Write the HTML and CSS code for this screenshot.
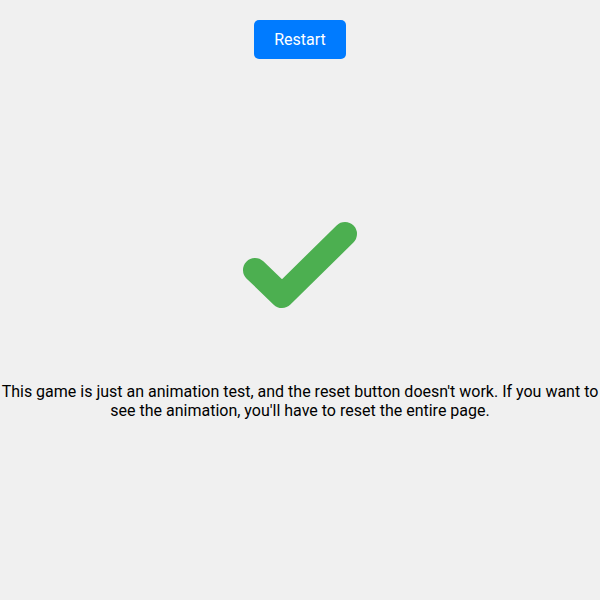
FILE: index.html
```html
<!DOCTYPE html>
<html>
<head>
<meta charset="utf-8">
<link rel="stylesheet" href="styles.css">
</head>
<body>
<div class="page">
  <button class="restart">Restart</button>
  <svg class="check" width="120" height="100" viewBox="0 0 120 100">
    <polyline points="15,55 42,81 105,19" fill="none" stroke="#4caf50" stroke-width="24" stroke-linecap="round" stroke-linejoin="round"/>
  </svg>
  <p class="note">This game is just an animation test, and the reset button doesn't work. If you want to see the animation, you'll have to reset the entire page.</p>
</div>
</body>
</html>
```
FILE: styles.css
```css
html, body {
  margin: 0;
  padding: 0;
  background: #f0f0f0;
}
.page {
  display: flex;
  flex-direction: column;
  align-items: center;
  padding-top: 20px;
  font-family: Roboto, "Noto Sans", sans-serif;
  color: #000;
}
.restart {
  font-family: Roboto, sans-serif;
  font-size: 16px;
  line-height: 19px;
  padding: 10px 20px;
  border: none;
  border-radius: 5px;
  background: #007bff;
  color: #fff;
  cursor: pointer;
}
.check {
  display: block;
  margin-top: 156px;
}
.note {
  margin: 67px 0 0;
  font-size: 16px;
  line-height: 19px;
  text-align: center;
}
```
